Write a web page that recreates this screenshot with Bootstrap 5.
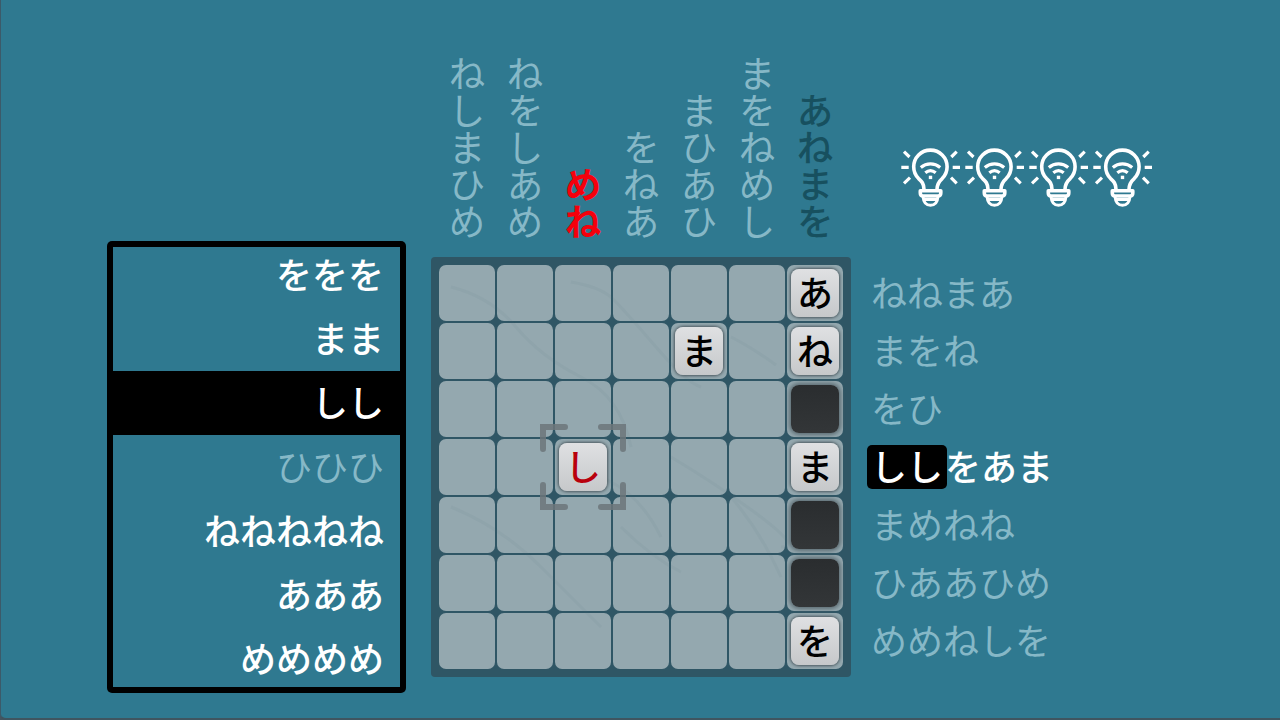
<!DOCTYPE html>
<html lang="ja">
<head>
<meta charset="utf-8">
<meta name="viewport" content="width=device-width, initial-scale=1">
<title>かなパズル</title>
<link href="https://cdn.jsdelivr.net/npm/bootstrap@5.3.0/dist/css/bootstrap.min.css" rel="stylesheet">
<style>
  :root { --sea: #2f7990; --pale: #86b8c7; --deep: #17505f; }
  body { background: #45555f; font-family: "Noto Sans CJK JP", sans-serif; font-size: 36px; line-height: 36px; color: #fff; }
  .game { background: var(--sea); border-left: 1px solid #3c5a69; border-bottom: 2px solid #3f5560; border-bottom-left-radius: 6px; }
  /* letter stock */
  .stock-col { width: 324px; padding-top: 241px; }
  .stock { width: 299px; padding: 2px 0; border-radius: 5px; box-shadow: inset 0 0 0 6px #000; }
  .stock li { height: 64px; padding: 0 22px 4px 0; font-weight: 500; }
  .stock .picked { background: #000; }
  .faded { color: var(--pale); }
  .stock .faded { font-weight: 400; }
  /* board */
  .board-col { padding-top: 55px; }
  .top-clues { height: 185px; padding: 0 7px; margin-bottom: 17px; color: var(--pale); font-size: 37px; }
  .top-clues li { width: 58px; line-height: 58px; writing-mode: vertical-rl; }
  .top-clues .wrong { color: #f5000c; font-weight: 700; }
  .top-clues .solved { color: var(--deep); font-weight: 500; }
  .board { display: grid; grid-template-columns: repeat(7, 56px); grid-auto-rows: 56px; gap: 2px; padding: 8px; background: #2f5665; border-radius: 4px; }
  .slot { padding: 4px; border: 0; border-radius: 7px; background: #94a8af; }
  .tile { display: block; height: 48px; border-radius: 8px; font-size: 36px; line-height: 44px; font-weight: 500; color: #000; text-align: center; background: linear-gradient(#dfe0e2, #c6c8ca); box-shadow: 0 0 3px 1px #4a575d; position: relative; z-index: 1; }
  .tile.wall { background: linear-gradient(#2a2d2f, #333638); box-shadow: 0 0 4px 2px #5c6c73; }
  .tile.bad { color: #b9000c; }
  .cursor { left: -15px; top: -15px; width: 86px; height: 86px; pointer-events: none; z-index: 1; }
  .veins { inset: 0; width: 100%; height: 100%; pointer-events: none; }
  /* right side */
  .side-col { width: 323px; padding-top: 145px; }
  .hints { padding-left: 47px; height: 64px; margin-bottom: 56px; }
  .hints svg { width: 64px; height: 64px; }
  .side-clues { padding-left: 20px; color: var(--pale); }
  .side-clues li { height: 58px; padding-bottom: 6px; }
  .side-clues .current { color: #fff; font-weight: 500; padding-bottom: 2px; }
  .current span { line-height: 40px; padding-bottom: 4px; }
  .current .found { background: #000; border-radius: 5px; margin: 0 -2px 0 -4px; padding: 0 4px 4px; }
</style>
</head>
<body>
<svg class="d-none" aria-hidden="true">
  <symbol id="bulb" viewBox="0 0 64 64">
    <g fill="none" stroke="#fff" stroke-width="3.6">
      <path d="M26 44.500C26 38.500 23.500 36.200 20.600 33.600A16.700 16.700 0 1 1 44.200 33.600C41.200 36.200 39 38.500 39 44.500"/>
      <path d="M22.300 45.800H42.800V48C42.800 50 42 51 40 51H25C23 51 22.300 50 22.300 48Z" stroke-linejoin="round"/>
      <path d="M25 51.500C25.500 57.500 28 60.300 32.500 60.300S39.500 57.500 40 51.500M25 54.500H40" stroke-width="3"/>
      <path d="M22.800 22.500C28.500 17.700 36.500 17.700 42.200 22.500M27.300 27.800C30.500 25.200 34.500 25.200 37.700 27.800" stroke-width="3.200"/>
      <path d="M3.300 22.300H10.700M54.700 22.300H62M6 6.700L11.500 12M58.700 6.700L53.300 12M6 38.300L12 32.700M58.700 38.300L53 32.700" stroke-width="3.200"/>
    </g>
    <rect x="30.800" y="30.700" width="3.400" height="3.400" fill="#fff"/>
  </symbol>
</svg>

<main class="game min-vh-100 d-flex justify-content-center align-items-start">
  <section class="stock-col flex-shrink-0" aria-label="文字">
    <ul class="stock list-unstyled mb-0">
      <li class="d-flex align-items-center justify-content-end">ををを</li>
      <li class="d-flex align-items-center justify-content-end">まま</li>
      <li class="picked d-flex align-items-center justify-content-end">しし</li>
      <li class="faded d-flex align-items-center justify-content-end">ひひひ</li>
      <li class="d-flex align-items-center justify-content-end">ねねねねね</li>
      <li class="d-flex align-items-center justify-content-end">あああ</li>
      <li class="d-flex align-items-center justify-content-end">めめめめ</li>
    </ul>
  </section>

  <section class="board-col flex-shrink-0">
    <ul class="top-clues list-unstyled d-flex align-items-end">
      <li>ねしまひめ</li>
      <li>ねをしあめ</li>
      <li class="wrong">めね</li>
      <li>をねあ</li>
      <li>まひあひ</li>
      <li>まをねめし</li>
      <li class="solved">あねまを</li>
    </ul>
    <div class="board position-relative" id="board">
      <svg class="veins position-absolute" viewBox="0 0 420 420" aria-hidden="true">
        <g fill="none" stroke="#5b737c" stroke-opacity=".07" stroke-width="3">
          <path d="M20 30Q60 40 85 70T150 120T200 190M140 25Q170 30 182 42T225 90T270 130M300 80Q320 90 345 108M240 200Q290 230 330 260T350 290M120 170Q150 210 180 225T230 280M190 270Q220 300 250 315M300 240Q330 275 350 320M20 250Q70 270 110 310T170 370"/>
        </g>
      </svg>
    </div>
  </section>

  <section class="side-col flex-shrink-0">
    <div class="hints d-flex" role="img" aria-label="ヒント 4">
      <svg><use href="#bulb"/></svg><svg><use href="#bulb"/></svg><svg><use href="#bulb"/></svg><svg><use href="#bulb"/></svg>
    </div>
    <ul class="side-clues list-unstyled mb-0">
      <li class="d-flex align-items-center">ねねまあ</li>
      <li class="d-flex align-items-center">まをね</li>
      <li class="d-flex align-items-center">をひ</li>
      <li class="current d-flex align-items-center"><span class="found">しし</span><span>をあま</span></li>
      <li class="d-flex align-items-center">まめねね</li>
      <li class="d-flex align-items-center">ひああひめ</li>
      <li class="d-flex align-items-center">めめねしを</li>
    </ul>
  </section>
</main>

<script src="https://cdn.jsdelivr.net/npm/bootstrap@5.3.0/dist/js/bootstrap.bundle.min.js"></script>
<script>
  // "." is an empty slot, "#" a wall
  const rows = ["......あ", "....ま.ね", "......#", "..し...ま", "......#", "......#", "......を"];
  const board = document.getElementById("board");
  const veins = board.querySelector(".veins");
  rows.forEach((row, y) => [...row].forEach((mark, x) => {
    const slot = document.createElement("button");
    slot.type = "button";
    slot.className = "slot";
    slot.setAttribute("aria-label", `${y + 1}-${x + 1}`);
    if (mark !== ".") {
      const tile = document.createElement("span");
      tile.className = mark === "#" ? "tile wall" : "tile";
      if (mark !== "#") tile.textContent = mark;
      slot.append(tile);
    }
    if (mark === "し") {
      slot.classList.add("position-relative");
      slot.firstChild.classList.add("bad");
      slot.insertAdjacentHTML("beforeend", '<svg class="cursor position-absolute" viewBox="0 0 86 86" aria-hidden="true"><path d="M3 25V3H25M61 3H83V25M83 61V83H61M25 83H3V61" fill="none" stroke="#6c767a" stroke-opacity=".85" stroke-width="6" stroke-linecap="round"/></svg>');
    }
    board.insertBefore(slot, veins);
  }));
</script>
</body>
</html>
